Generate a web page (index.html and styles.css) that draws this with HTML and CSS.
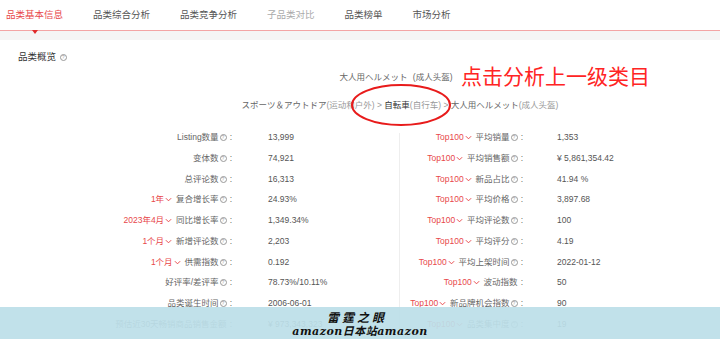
FILE: index.html
```html
<!DOCTYPE html>
<html lang="zh">
<head>
  <meta charset="UTF-8">
  <title>品类基本信息</title>
  <link rel="stylesheet" href="styles.css">
</head>
<body>

  <div class="tabs">
    <div class="tab active">品类基本信息</div>
    <div class="tab">品类综合分析</div>
    <div class="tab">品类竞争分析</div>
    <div class="tab disabled">子品类对比</div>
    <div class="tab">品类榜单</div>
    <div class="tab">市场分析</div>
  </div>
  <div class="strip"></div>

  <div class="panel">
    <div class="panel-title">品类概览 <span class="q">?</span></div>
    <div class="cat-title">大人用ヘルメット <span class="cn">(成人头盔)</span></div>
    <div class="crumbs">
      <span class="jp">スポーツ＆アウトドア</span><span class="cn">(运动和户外)</span>
      <span class="sep">&gt;</span>
      <span class="jp cur">自転車</span><span class="cn">(自行车)</span>
      <span class="sep">&gt;</span>
      <span class="jp">大人用ヘルメット</span><span class="cn">(成人头盔)</span>
    </div>

    <div class="stats">
      <div class="col left">
        <div class="row"><div class="label">Listing数量<span class="q">?</span><span class="colon">:</span></div><div class="value">13,999</div></div>
        <div class="row"><div class="label">变体数<span class="q">?</span><span class="colon">:</span></div><div class="value">74,921</div></div>
        <div class="row"><div class="label">总评论数<span class="q">?</span><span class="colon">:</span></div><div class="value">16,313</div></div>
        <div class="row"><div class="label"><span class="sel">1年<svg class="chev" viewBox="0 0 8 5"><path d="M1 1l3 3 3-3"/></svg></span>复合增长率<span class="q">?</span><span class="colon">:</span></div><div class="value">24.93%</div></div>
        <div class="row"><div class="label"><span class="sel">2023年4月<svg class="chev" viewBox="0 0 8 5"><path d="M1 1l3 3 3-3"/></svg></span>同比增长率<span class="q">?</span><span class="colon">:</span></div><div class="value">1,349.34%</div></div>
        <div class="row"><div class="label"><span class="sel">1个月<svg class="chev" viewBox="0 0 8 5"><path d="M1 1l3 3 3-3"/></svg></span>新增评论数<span class="q">?</span><span class="colon">:</span></div><div class="value">2,203</div></div>
        <div class="row"><div class="label"><span class="sel">1个月<svg class="chev" viewBox="0 0 8 5"><path d="M1 1l3 3 3-3"/></svg></span>供需指数<span class="q">?</span><span class="colon">:</span></div><div class="value">0.192</div></div>
        <div class="row"><div class="label">好评率/差评率<span class="q">?</span><span class="colon">:</span></div><div class="value">78.73%/10.11%</div></div>
        <div class="row"><div class="label">品类诞生时间<span class="q">?</span><span class="colon">:</span></div><div class="value">2006-06-01</div></div>
        <div class="row"><div class="label">预估近30天畅销商品销售金额<span class="colon">:</span></div><div class="value">¥ 973,343,323</div></div>
      </div>

      <div class="col right">
        <div class="row"><div class="label"><span class="sel">Top100<svg class="chev" viewBox="0 0 8 5"><path d="M1 1l3 3 3-3"/></svg></span>平均销量<span class="q">?</span><span class="colon">:</span></div><div class="value">1,353</div></div>
        <div class="row"><div class="label"><span class="sel">Top100<svg class="chev" viewBox="0 0 8 5"><path d="M1 1l3 3 3-3"/></svg></span>平均销售额<span class="q">?</span><span class="colon">:</span></div><div class="value">¥ 5,861,354.42</div></div>
        <div class="row"><div class="label"><span class="sel">Top100<svg class="chev" viewBox="0 0 8 5"><path d="M1 1l3 3 3-3"/></svg></span>新品占比<span class="q">?</span><span class="colon">:</span></div><div class="value">41.94 %</div></div>
        <div class="row"><div class="label"><span class="sel">Top100<svg class="chev" viewBox="0 0 8 5"><path d="M1 1l3 3 3-3"/></svg></span>平均价格<span class="q">?</span><span class="colon">:</span></div><div class="value">3,897.68</div></div>
        <div class="row"><div class="label"><span class="sel">Top100<svg class="chev" viewBox="0 0 8 5"><path d="M1 1l3 3 3-3"/></svg></span>平均评论数<span class="q">?</span><span class="colon">:</span></div><div class="value">100</div></div>
        <div class="row"><div class="label"><span class="sel">Top100<svg class="chev" viewBox="0 0 8 5"><path d="M1 1l3 3 3-3"/></svg></span>平均评分<span class="q">?</span><span class="colon">:</span></div><div class="value">4.19</div></div>
        <div class="row"><div class="label"><span class="sel">Top100<svg class="chev" viewBox="0 0 8 5"><path d="M1 1l3 3 3-3"/></svg></span>平均上架时间<span class="q">?</span><span class="colon">:</span></div><div class="value">2022-01-12</div></div>
        <div class="row"><div class="label"><span class="sel">Top100<svg class="chev" viewBox="0 0 8 5"><path d="M1 1l3 3 3-3"/></svg></span>波动指数<span class="colon">:</span></div><div class="value">50</div></div>
        <div class="row"><div class="label"><span class="sel">Top100<svg class="chev" viewBox="0 0 8 5"><path d="M1 1l3 3 3-3"/></svg></span>新品牌机会指数<span class="q">?</span><span class="colon">:</span></div><div class="value">90</div></div>
        <div class="row"><div class="label"><span class="sel">Top100<svg class="chev" viewBox="0 0 8 5"><path d="M1 1l3 3 3-3"/></svg></span>品类集中度<span class="q">?</span><span class="colon">:</span></div><div class="value">19</div></div>
      </div>
    </div>
  </div>

  <!-- annotation drawn over the screenshot -->
  <div class="note">点击分析上一级类目</div>
  <svg class="ring" width="104" height="46" viewBox="0 0 104 46">
    <ellipse cx="52" cy="23" rx="49" ry="20" />
  </svg>

  <div class="watermark">
    <div class="wm1">雷霆之眼</div>
    <div class="wm2">amazon日本站amazon</div>
  </div>

</body>
</html>
```

FILE: styles.css
```css
body {
  margin: 0;
  width: 720px;
  height: 339px;
  overflow: hidden;
  position: relative;
  background: #fff;
  font-family: "Liberation Sans", "Noto Sans CJK SC", "Noto Sans CJK JP", sans-serif;
  font-size: 8.5px;
  color: #555;
}

.tabs {
  display: flex;
  gap: 30px;
  height: 30px;
  padding-left: 6px;
  border-bottom: 1px solid #f3a5a5;
  background: #fff;
}

.tab {
  position: relative;
  line-height: 30px;
  font-size: 9.5px;
  color: #555;
}

.tab.active {
  color: #e8474a;
}

.tab.active::after {
  content: "";
  position: absolute;
  left: 50%;
  bottom: -4px;
  margin-left: -3px;
  border-left: 3px solid transparent;
  border-right: 3px solid transparent;
  border-top: 4px solid #e02b2b;
}

.tab.disabled {
  color: #aaa;
}

.strip {
  height: 9px;
  background: #f5f5f5;
}

.panel {
  padding-top: 10px;
}

.panel-title {
  padding-left: 18px;
  line-height: 14px;
  color: #333;
  font-size: 9.5px;
}

.q {
  display: inline-block;
  width: 5px;
  height: 5px;
  border: 1px solid #999;
  border-radius: 50%;
  font-size: 4.5px;
  line-height: 5px;
  text-align: center;
  color: #999;
  vertical-align: 1px;
  margin-left: 1px;
}

.cat-title {
  margin-top: 6px;
  padding-left: 72px;
  text-align: center;
  line-height: 14px;
  color: #666;
}

.cat-title .cn {
  margin-left: 3px;
}

.crumbs {
  margin-top: 14px;
  padding-left: 80px;
  text-align: center;
  line-height: 14px;
  color: #666;
}

.crumbs .cn {
  color: #999;
}

.crumbs .cur {
  color: #333;
}

.crumbs .sep {
  color: #999;
}

.stats {
  display: flex;
  margin-top: 15px;
}

.col.left {
  width: 400px;
}

.col.right {
  position: relative;
  width: 320px;
}

.col.right::before {
  content: "";
  position: absolute;
  left: -1px;
  top: 6px;
  bottom: 0;
  border-left: 1px solid #eee;
}

.row {
  display: flex;
  height: 20.75px;
  line-height: 20.75px;
}

.left .label {
  width: 232px;
}

.left .value {
  margin-left: 36px;
}

.right .label {
  width: 123px;
}

.right .value {
  margin-left: 34px;
}

.label {
  text-align: right;
  color: #666;
  white-space: nowrap;
}

.colon {
  margin-left: 3px;
}

.value {
  color: #555;
  white-space: nowrap;
}

.sel {
  color: #e8474a;
  margin-right: 4px;
}

.chev {
  width: 7px;
  height: 5px;
  margin-left: 1px;
  vertical-align: 0;
}

.chev path {
  fill: none;
  stroke: #e8474a;
  stroke-width: 1.1;
}

.note {
  position: absolute;
  left: 461px;
  top: 61px;
  font-family: "Noto Sans CJK SC", sans-serif;
  font-size: 21px;
  line-height: 28px;
  color: #ff2424;
}

.ring {
  position: absolute;
  left: 349px;
  top: 82px;
}

.ring ellipse {
  fill: none;
  stroke: #e81b1b;
  stroke-width: 2;
}

.watermark {
  position: absolute;
  left: 0;
  bottom: 0;
  width: 720px;
  height: 32px;
  background: rgba(188, 223, 232, 0.93);
  text-align: center;
  color: #111;
  font-family: "DejaVu Serif", "Noto Sans CJK SC", serif;
  font-style: italic;
  font-weight: bold;
}

.wm1 {
  padding-top: 4px;
  padding-right: 6px;
  font-size: 12px;
  line-height: 14px;
  letter-spacing: 3px;
}

.wm2 {
  font-size: 11px;
  line-height: 13px;
  letter-spacing: 0.5px;
}
```
